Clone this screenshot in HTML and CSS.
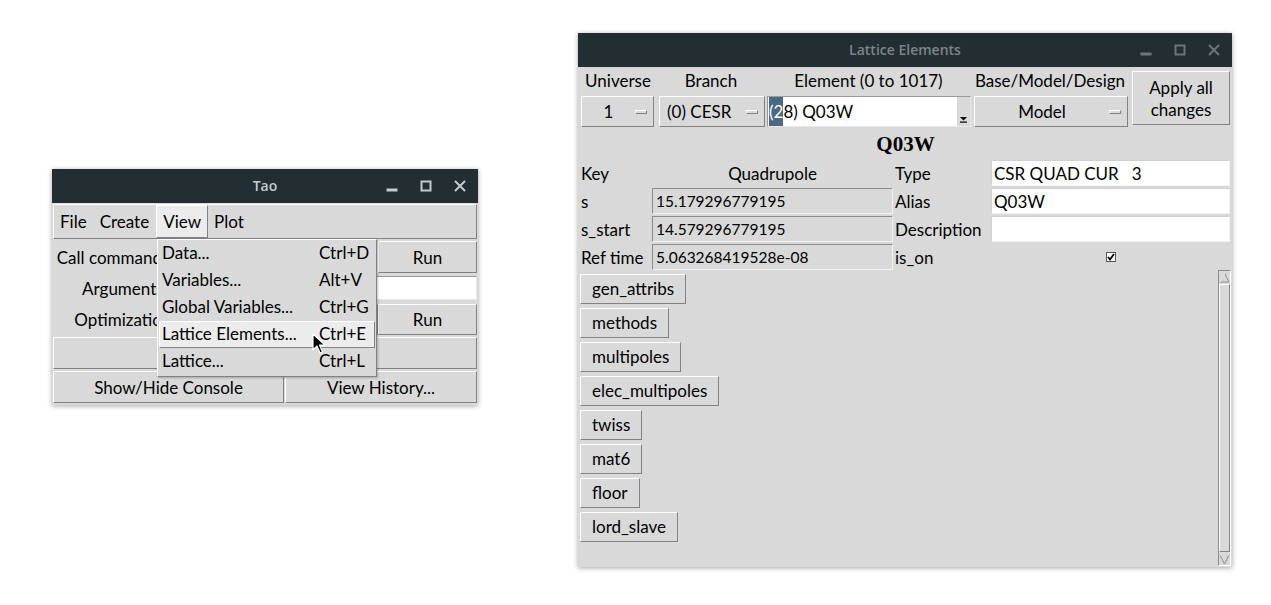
FILE: index.html
```html
<!DOCTYPE html>
<html>
<head>
<meta charset="utf-8">
<link rel="stylesheet" href="styles.css">
</head>
<body>
<div class="desktop">

  <!-- Tao window -->
  <div class="win tao">
    <div class="titlebar active">
      <span class="title">Tao</span>
      <div class="wbtns">
        <svg width="12" height="12" viewBox="0 0 12 12"><rect x="1" y="9" width="10" height="2"/></svg>
        <svg width="12" height="12" viewBox="0 0 12 12"><rect x="1.5" y="1.5" width="9" height="9" fill="none" stroke-width="2"/></svg>
        <svg width="12" height="12" viewBox="0 0 12 12"><path d="M1 1 L11 11 M11 1 L1 11" stroke-width="2"/></svg>
      </div>
    </div>
    <div class="tao-body">
      <div class="menubar">
        <span class="mi">File</span>
        <span class="mi">Create</span>
        <span class="mi open">View</span>
        <span class="mi">Plot</span>
      </div>
      <div class="tao-grid">
        <div class="lbl r1">Call command file:</div>
        <div class="entry white r1"></div>
        <div class="btn r1">Run</div>
        <div class="lbl r2">Arguments:</div>
        <div class="entry white r2 span2"></div>
        <div class="lbl r3">Optimization:</div>
        <div class="btn r3"></div>
        <div class="btn r3">Run</div>
        <div class="btn r4 span3"></div>
        <div class="r5 span3 pair">
          <div class="btn">Show/Hide Console</div>
          <div class="btn">View History...</div>
        </div>
      </div>
    </div>
  </div>

  <!-- dropdown menu -->
  <div class="menu">
    <div class="item"><span>Data...</span><span>Ctrl+D</span></div>
    <div class="item"><span>Variables...</span><span>Alt+V</span></div>
    <div class="item"><span>Global Variables...</span><span>Ctrl+G</span></div>
    <div class="item hl"><span>Lattice Elements...</span><span>Ctrl+E</span></div>
    <div class="item"><span>Lattice...</span><span>Ctrl+L</span></div>
  </div>

  <svg class="cursor" width="14" height="22" viewBox="0 0 14 22">
    <path d="M1 1 L1 17 L5 13 L8 20 L10.5 19 L7.5 12 L13 12 Z" fill="#000" stroke="#fff" stroke-width="1.2" stroke-linejoin="round"/>
  </svg>

  <!-- Lattice Elements window -->
  <div class="win lat">
    <div class="titlebar inactive">
      <span class="title">Lattice Elements</span>
      <div class="wbtns">
        <svg width="12" height="12" viewBox="0 0 12 12"><rect x="1" y="9" width="10" height="2"/></svg>
        <svg width="12" height="12" viewBox="0 0 12 12"><rect x="1.5" y="1.5" width="9" height="9" fill="none" stroke-width="2"/></svg>
        <svg width="12" height="12" viewBox="0 0 12 12"><path d="M1 1 L11 11 M11 1 L1 11" stroke-width="2"/></svg>
      </div>
    </div>
    <div class="lat-body">
      <div class="top-grid">
        <div class="hl-lbl">Universe</div>
        <div class="hl-lbl">Branch</div>
        <div class="hl-lbl">Element (0 to 1017)</div>
        <div class="hl-lbl">Base/Model/Design</div>
        <div class="btn apply">Apply all<br>changes</div>

        <div class="mbtn w-uni"><span class="mtxt c">1</span><span class="ind"></span></div>
        <div class="mbtn w-br"><span class="mtxt">(0) CESR</span><span class="ind"></span></div>
        <div class="combo"><span class="ctxt"><span class="sel">(2</span>8) Q03W</span>
          <span class="carrow"><svg width="9" height="7" viewBox="0 0 9 7"><path d="M1 1 L8 1 L4.5 4.5 Z" fill="#000"/><rect x="1" y="5.5" width="7" height="1.2" fill="#000"/></svg></span>
        </div>
        <div class="mbtn w-mod"><span class="mtxt c">Model</span><span class="ind"></span></div>
      </div>

      <div class="ele-name">Q03W</div>

      <div class="info-grid">
        <div class="k">Key</div>
        <div class="v plain">Quadrupole</div>
        <div class="k">Type</div>
        <div class="e">CSR QUAD CUR   3</div>

        <div class="k">s</div>
        <div class="v">15.179296779195</div>
        <div class="k">Alias</div>
        <div class="e">Q03W</div>

        <div class="k">s_start</div>
        <div class="v">14.579296779195</div>
        <div class="k">Description</div>
        <div class="e"></div>

        <div class="k">Ref time</div>
        <div class="v">5.063268419528e-08</div>
        <div class="k">is_on</div>
        <div class="chk-cell"><span class="chk"><svg width="8" height="8" viewBox="0 0 8 8"><path d="M1 4 L3 6.5 L7 1" fill="none" stroke="#000" stroke-width="1.8"/></svg></span></div>
      </div>

      <div class="scroll-area">
        <div class="btn-list">
          <div class="btn sec">gen_attribs</div>
          <div class="btn sec">methods</div>
          <div class="btn sec">multipoles</div>
          <div class="btn sec">elec_multipoles</div>
          <div class="btn sec">twiss</div>
          <div class="btn sec">mat6</div>
          <div class="btn sec">floor</div>
          <div class="btn sec">lord_slave</div>
        </div>
        <div class="vscroll">
          <div class="sarrow"><svg width="11" height="11" viewBox="0 0 11 11"><path d="M5.5 1 L10 10 L1 10 Z" fill="#d9d9d9" stroke="#8a8a8a"/><path d="M5.5 1 L1 10" stroke="#fff"/></svg></div>
          <div class="strough"></div>
          <div class="sarrow"><svg width="11" height="11" viewBox="0 0 11 11"><path d="M1 1 L10 1 L5.5 10 Z" fill="#d9d9d9" stroke="#8a8a8a"/><path d="M1 1 L10 1" stroke="#fff"/></svg></div>
        </div>
      </div>
    </div>
  </div>

</div>
</body>
</html>
```

FILE: styles.css
```css
html, body {
  margin: 0;
  padding: 0;
  background: #ffffff;
}
body {
  font-family: "Lato", "Open Sans", sans-serif;
  font-size: 17px;
  color: #000;
}
.desktop {
  position: relative;
  width: 1271px;
  height: 605px;
  overflow: hidden;
}

/* windows */
.win {
  position: absolute;
  background: #d9d9d9;
  box-shadow: 0 1px 5px rgba(0,0,0,0.35);
  display: flex;
  flex-direction: column;
}
.tao { left: 52px; top: 169px; width: 426px; height: 236px; }
.lat { left: 578px; top: 33px; width: 654px; height: 534px; }

.titlebar {
  height: 34px;
  flex: none;
  background: #232e33;
  position: relative;
  display: flex;
  align-items: center;
  justify-content: center;
  font-family: "Open Sans", "Lato", sans-serif;
  font-weight: 600;
  font-size: 14px;
  padding-bottom: 1px;
  box-sizing: border-box;
}
.titlebar.active { color: #c4cbcf; }
.titlebar.inactive { color: #7a858a; }
.titlebar.active svg { fill: #c4cbcf; stroke: #c4cbcf; }
.titlebar.inactive svg { fill: #6b767b; stroke: #6b767b; }
.wbtns {
  position: absolute;
  right: 12px;
  top: 11px;
  display: flex;
  gap: 22px;
}
.wbtns svg { display: block; }

/* generic Tk-like widgets */
.btn {
  background: #d9d9d9;
  border: 1px solid;
  border-color: #ffffff #828282 #828282 #ffffff;
  display: flex;
  align-items: center;
  justify-content: center;
  box-sizing: border-box;
  white-space: nowrap;
}
.entry {
  box-sizing: border-box;
  border: 1px solid;
  border-color: #9a9a9a #e8e8e8 #e8e8e8 #9a9a9a;
}
.white { background: #ffffff; }

/* Tao body */
.tao-body {
  flex: 1;
  display: flex;
  flex-direction: column;
  padding: 1px 1px 1px 1px;
}
.menubar {
  height: 35px;
  flex: none;
  box-sizing: border-box;
  border: 1px solid;
  border-color: #ffffff #828282 #828282 #ffffff;
  display: flex;
  align-items: stretch;
}
.mi {
  display: flex;
  align-items: center;
  padding: 0 6px 0 5px;
  box-sizing: border-box;
  border: 1px solid transparent;
}
.mi.open {
  background: #ececec;
  border-color: #ffffff #828282 #828282 #ffffff;
  padding: 0 6px 0 6px;
}
.tao-grid {
  margin-top: 2px;
  display: grid;
  grid-template-columns: 144px 181px 99px;
  grid-template-rows: 34px 28px 33px 34px 34px;
}
.tao-grid .r1 { margin: 0 0 2px; }
.tao-grid .r2 { margin: 1px 0 3px; }
.tao-grid .r3 { margin: 1px 0 1px; }
.tao-grid .r4 { margin: 1px 0 1px; }
.tao-grid .r5 { margin: 1px 0 1px; }
.lbl {
  display: flex;
  align-items: center;
  justify-content: center;
  white-space: nowrap;
}
.span2 { grid-column: span 2; }
.span3 { grid-column: span 3; }
.pair {
  display: grid;
  grid-template-columns: 231px 1fr;
  gap: 1px;
}

/* dropdown */
.menu {
  position: absolute;
  left: 157px;
  top: 239px;
  width: 220px;
  box-sizing: border-box;
  background: #d9d9d9;
  border: 1px solid;
  border-color: #ffffff #828282 #828282 #ffffff;
  box-shadow: 1px 1px 2px rgba(0,0,0,0.25);
  padding: 0 1px 1px 1px;
}
.item {
  height: 27px;
  display: grid;
  grid-template-columns: 157px 1fr;
  align-items: center;
  padding: 0 0 2px 2px;
  box-sizing: border-box;
  border: 1px solid transparent;
  white-space: nowrap;
}
.item.hl {
  background: #ececec;
  border-color: #ffffff #828282 #828282 #ffffff;
}
.cursor {
  position: absolute;
  left: 312px;
  top: 333px;
}

/* Lattice Elements body */
.lat-body {
  flex: 1;
  display: flex;
  flex-direction: column;
  padding: 0 1px 0 2px;
  min-height: 0;
}
.top-grid {
  display: grid;
  grid-template-columns: 76px 110px 205px 158px 101px;
  grid-template-rows: 25px 34px;
  margin-top: 2px;
}
.hl-lbl {
  display: flex;
  align-items: center;
  justify-content: center;
  white-space: nowrap;
  padding-bottom: 2px;
}
.apply {
  grid-column: 5;
  grid-row: 1 / span 2;
  margin: 2px 0 3px 3px;
  line-height: 22px;
  text-align: center;
  flex-direction: column;
  padding-top: 2px;
}
.mbtn {
  background: #d9d9d9;
  border: 1px solid;
  border-color: #ffffff #828282 #828282 #ffffff;
  box-sizing: border-box;
  display: flex;
  align-items: center;
  margin: 2px 0 1px 0;
}
.w-uni { margin-left: 1px; margin-right: 2px; }
.w-br { margin-left: 3px; margin-right: 1px; }
.w-mod { margin-left: 3px; margin-right: 1px; }
.mtxt { flex: 1; padding-left: 7px; white-space: nowrap; }
.mtxt.c { text-align: center; padding-left: 0; }
.ind {
  width: 12px;
  height: 4px;
  box-sizing: border-box;
  border: 1px solid;
  border-color: #ffffff #828282 #828282 #ffffff;
  margin-right: 6px;
  flex: none;
}
.combo {
  background: #ffffff;
  margin: 2px 0 1px 1px;
  box-sizing: border-box;
  border: 1px solid;
  border-color: #9a9a9a #e8e8e8 #e8e8e8 #9a9a9a;
  display: flex;
  align-items: stretch;
}
.ctxt { flex: 1; display: flex; align-items: center; white-space: pre; padding-left: 1px; }
.sel { background: #4a6984; color: #ffffff; align-self: stretch; display: flex; align-items: center; }
.carrow {
  width: 13px;
  background: #d9d9d9;
  border-left: 1px solid #ffffff;
  display: flex;
  align-items: flex-end;
  justify-content: center;
  padding-bottom: 3px;
}

.ele-name {
  font-family: "Liberation Serif", serif;
  font-weight: bold;
  font-size: 21px;
  text-align: center;
  height: 30px;
  line-height: 30px;
  margin-top: 1px;
}

.info-grid {
  display: grid;
  grid-template-columns: 71px 241px 96px 239px;
  grid-template-rows: repeat(4, 26px);
  row-gap: 2px;
  column-gap: 1px;
  margin-top: 1px;
}
.k { display: flex; align-items: center; white-space: nowrap; padding-left: 1px; }
.v {
  display: flex;
  align-items: center;
  padding-left: 3px;
  box-sizing: border-box;
  border: 1px solid;
  border-color: #8c8c8c #f2f2f2 #f2f2f2 #8c8c8c;
  white-space: nowrap;
  font-size: 15.5px;
}
.v.plain { border-color: transparent; justify-content: center; padding-left: 0; font-size: 17px; }
.e {
  background: #ffffff;
  display: flex;
  align-items: center;
  padding-left: 2px;
  box-sizing: border-box;
  border: 1px solid;
  border-color: #d0d0d0 #f2f2f2 #f2f2f2 #d0d0d0;
  white-space: pre;
}
.chk-cell { display: flex; align-items: center; justify-content: center; }
.chk {
  width: 10px;
  height: 10px;
  box-sizing: border-box;
  background: #ffffff;
  border: 1px solid #555;
  display: flex;
  align-items: center;
  justify-content: center;
}
.chk svg { display: block; }

.scroll-area {
  flex: 1;
  display: flex;
  margin-top: 0;
  min-height: 0;
}
.btn-list {
  flex: 1;
  display: flex;
  flex-direction: column;
  align-items: flex-start;
  gap: 4px;
  padding-top: 4px;
}
.btn.sec {
  height: 30px;
  padding: 0 11px 1px;
}
.vscroll {
  width: 13px;
  display: flex;
  flex-direction: column;
  box-sizing: border-box;
  border: 1px solid;
  border-color: #8c8c8c #ffffff #ffffff #8c8c8c;
  margin-bottom: 1px;
}
.sarrow {
  height: 12px;
  display: flex;
  align-items: center;
  justify-content: center;
  flex: none;
}
.sarrow svg { display: block; }
.strough {
  flex: 1;
  border: 1px solid;
  border-color: #ffffff #828282 #828282 #ffffff;
  margin: 1px 0;
}
```
